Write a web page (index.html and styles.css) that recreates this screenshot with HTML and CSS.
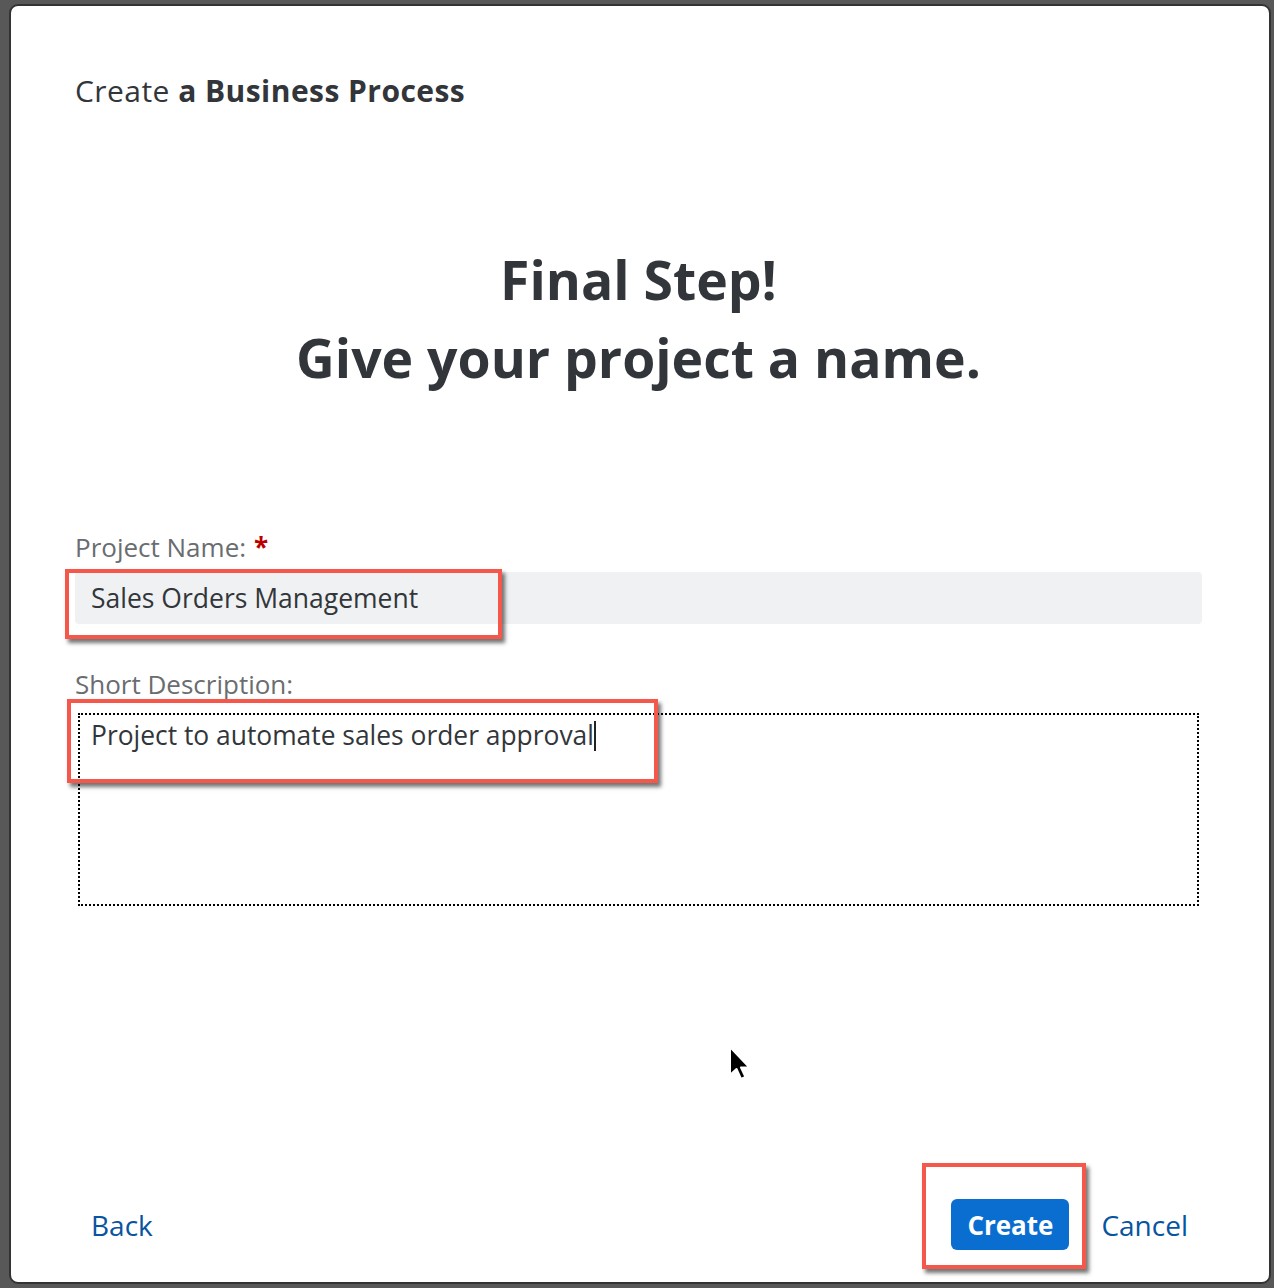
FILE: index.html
```html
<!DOCTYPE html>
<html lang="en">
<head>
<meta charset="utf-8">
<title>Create a Business Process</title>
<link rel="stylesheet" href="styles.css">
</head>
<body>
<div class="dialog">
  <header class="dialog-title">Create <b>a Business Process</b></header>
  <h1 class="heading">Final Step!<br>Give your project a name.</h1>
  <div class="form">
    <label class="label">Project Name:<span class="req">*</span></label>
    <div class="field">
      <div class="input">Sales Orders Management</div>
      <div class="mark mark-name"></div>
    </div>
    <label class="label label-desc">Short Description:</label>
    <div class="field">
      <div class="textarea">Project to automate sales order approval<span class="caret"></span></div>
      <div class="mark mark-desc"></div>
    </div>
  </div>
  <svg class="pointer" width="26" height="38" viewBox="0 0 26 38">
    <path d="M2 2 L2 30 L8.5 24 L13 34 L17.5 32 L13 22.5 L21.5 22.5 Z" fill="#000" stroke="#fff" stroke-width="2" stroke-linejoin="round"/>
  </svg>
  <footer class="footer">
    <button class="link-btn">Back</button>
    <div class="actions">
      <div class="btn-wrap">
        <button class="primary-btn">Create</button>
        <div class="mark mark-create"></div>
      </div>
      <button class="link-btn">Cancel</button>
    </div>
  </footer>
</div>
</body>
</html>
```
FILE: styles.css
```css
* { box-sizing: border-box; }
html, body { margin: 0; height: 100%; }
body {
  background: #585858;
  padding: 4px 3px 4px 9px;
  font-family: "Open Sans", "Noto Sans", sans-serif;
  color: #32363a;
}
.dialog {
  position: relative;
  height: 1280px;
  background: #fff;
  border: 2px solid #333;
  border-radius: 9px;
  padding: 68px 67px 32px 64px;
  display: flex;
  flex-direction: column;
}
.dialog-title {
  font-size: 30px;
  line-height: 34px;
  letter-spacing: 0.45px;
  color: #32363a;
}
.dialog-title b { font-weight: 700; }
.heading {
  margin: 133px 0 0;
  text-align: center;
  font-size: 53.5px;
  line-height: 78px;
  font-weight: 700;
  color: #32363a;
}
.form { margin-top: 135px; display: flex; flex-direction: column; }
.label {
  font-size: 26px;
  line-height: 30px;
  color: #6a6d70;
}
.req { color: #bb0000; font-weight: 700; margin-left: 8px; }
.label-desc { margin-top: 45px; }
.field { position: relative; margin-top: 10px; }
.input {
  height: 52px;
  background: #eff1f2;
  border-radius: 4px;
  padding: 0 16px;
  font-size: 26.5px;
  line-height: 52px;
  color: #32363a;
}
.label-desc + .field { margin-top: 14px; }
.textarea {
  margin: 0 3px;
  height: 193px;
  border: 2px dotted #000;
  padding: 2px 11px;
  font-size: 26.4px;
  line-height: 36px;
  color: #32363a;
}
.caret {
  display: inline-block;
  width: 0;
  height: 30px;
  border-left: 2px solid #222;
  vertical-align: -6px;
}
.mark {
  position: absolute;
  border: 4px solid #f5574a;
  box-shadow: 3px 4px 4px rgba(0,0,0,0.55);
  pointer-events: none;
}
.mark-name { left: -10px; top: -3px; width: 437px; height: 70px; }
.mark-desc { left: -8px; top: -14px; width: 591px; height: 84px; }
.pointer { position: absolute; left: 717px; top: 1039px; }
.footer {
  margin-top: auto;
  margin-right: -2px;
  display: flex;
  justify-content: space-between;
  align-items: center;
}
.actions { display: flex; align-items: center; gap: 0; }
.link-btn {
  font-family: inherit;
  background: none;
  border: 0;
  color: #0854a0;
  font-size: 28px;
  padding: 0 16px;
  height: 51px;
}
.btn-wrap { position: relative; margin-right: 16px; }
.primary-btn {
  font-family: inherit;
  background: #0a6ed1;
  color: #fff;
  border: 0;
  border-radius: 6px;
  font-size: 26px;
  font-weight: 700;
  width: 118px;
  height: 51px;
  display: block;
}
.mark-create { left: -29px; top: -36px; width: 164px; height: 106px; }
```
